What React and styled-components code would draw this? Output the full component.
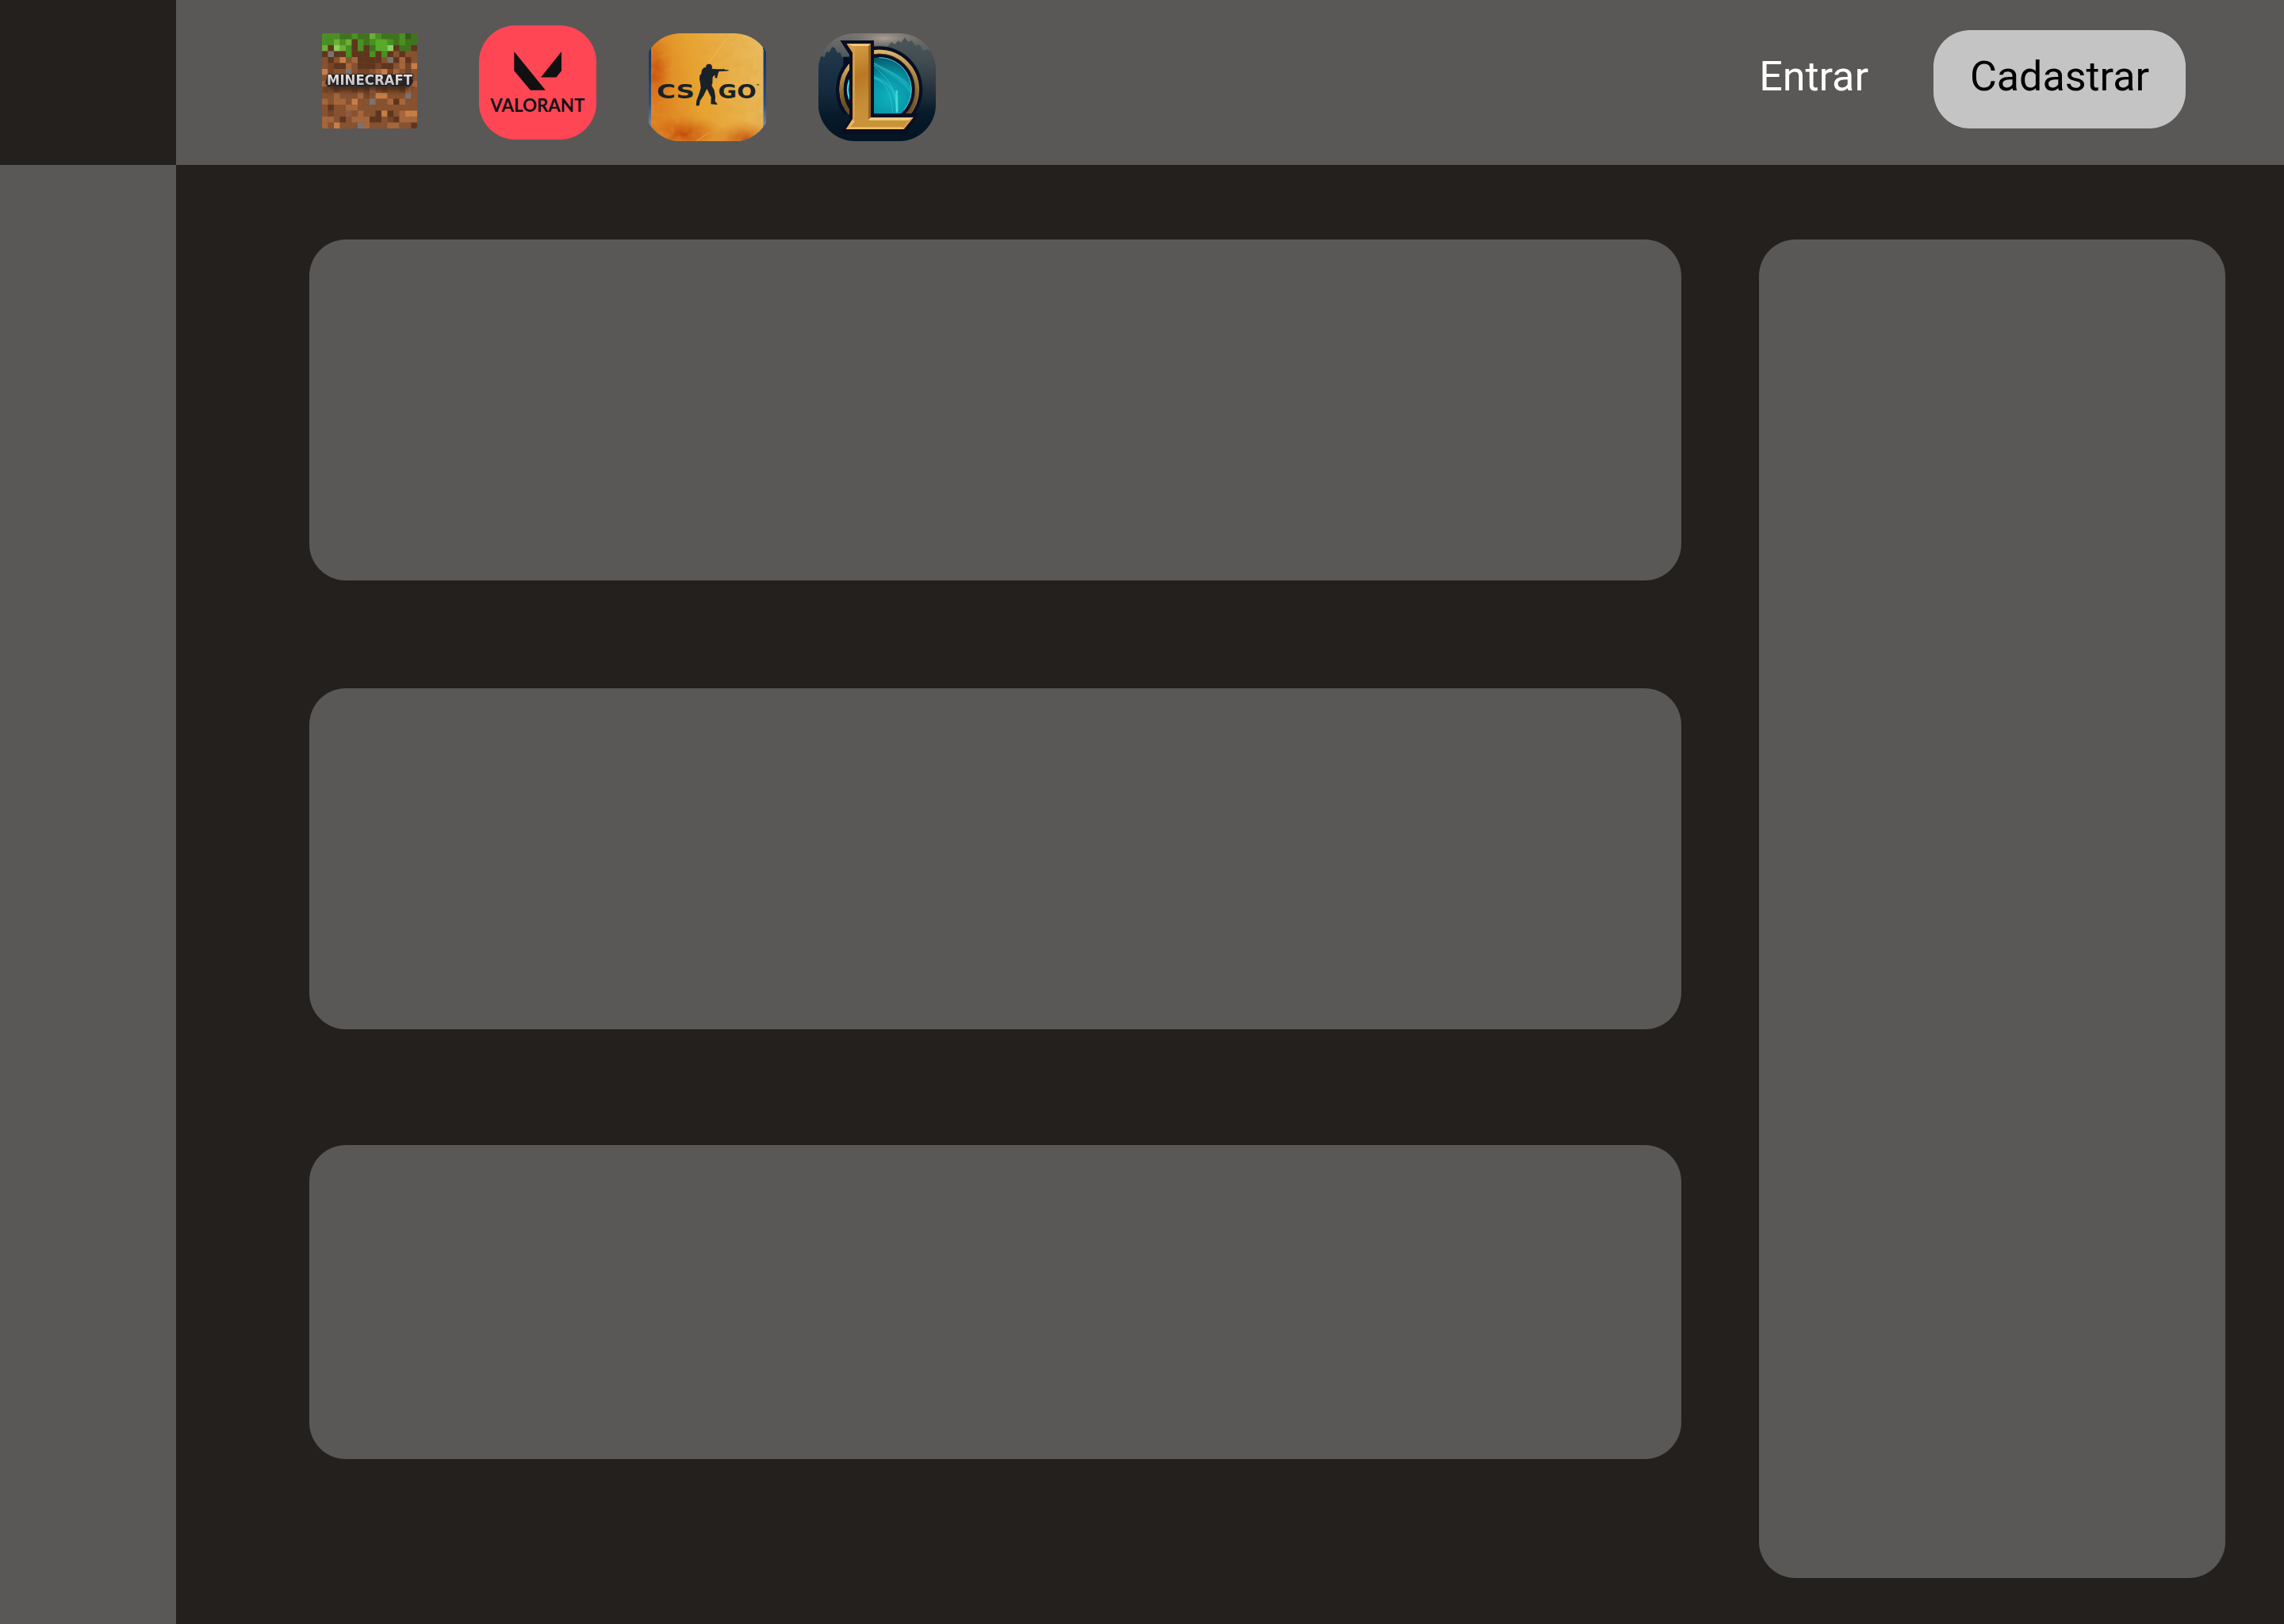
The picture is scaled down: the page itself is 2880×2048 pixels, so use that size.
import React from "react";
import styled, { createGlobalStyle } from "styled-components";

const surface = "#595856";
const ink = "#24201d";

const GlobalStyle = createGlobalStyle`
  * { box-sizing: border-box; }
  body { margin: 0; background: ${ink}; font-family: Roboto, "Liberation Sans", sans-serif; }
`;

const Page = styled.div`
  display: grid;
  grid-template-columns: 222px 1fr;
  grid-template-rows: 208px 1fr;
  width: 100%;
  height: 2048px;
  background: ${ink};
  overflow: hidden;
`;

const Corner = styled.div`
  background: ${ink};
`;

const Header = styled.header`
  display: flex;
  justify-content: space-between;
  align-items: flex-start;
  padding: 32px 124px 0 184px;
  background: ${surface};
`;

const Games = styled.nav`
  display: flex;
  align-items: flex-start;
`;

const Game = styled.a`
  display: block;
  width: ${(p) => p.$w}px;
  height: ${(p) => p.$h}px;
  margin: ${(p) => p.$top || 0}px ${(p) => p.$gap || 0}px 0 0;
  border-radius: ${(p) => p.$radius}px;
  overflow: hidden;
  svg { display: block; width: 100%; height: 100%; }
`;

const Account = styled.div`
  display: flex;
  align-items: center;
  gap: 82px;
  padding-top: 6px;
`;

const Login = styled.a`
  font-size: 52px;
  line-height: 60px;
  color: #fff;
  padding-bottom: 6px;
`;

const SignUp = styled.button`
  width: 318px;
  height: 124px;
  border: 0;
  border-radius: 46px;
  padding: 0 0 6px;
  background: #c4c4c4;
  color: #000;
  font: 400 52px/60px Roboto, "Liberation Sans", sans-serif;
`;

const Sidebar = styled.aside`
  background: ${surface};
`;

const Main = styled.main`
  display: grid;
  grid-template-columns: 1730px 588px;
  column-gap: 98px;
  align-items: start;
  padding: 94px 74px 0 168px;
`;

const Feed = styled.section`
  display: flex;
  flex-direction: column;
`;

const Card = styled.article`
  height: ${(p) => p.$h}px;
  margin-bottom: ${(p) => p.$after || 0}px;
  border-radius: 46px;
  background: ${surface};
`;

const blocks = {
  g: "#4a8f23", d: "#41731f", b: "#6dae38", L: "#8fcf5e", e: "#57ab27", x: "#365c19",
  k: "#5f361d", m: "#754526", n: "#865230", o: "#a4663c", p: "#c67e49", s: "#7b7370", t: "#8d5a42",
};

const dirt = [
  "gggddgddbgdddgxd",
  "ggbgbkgdgeegdgdd",
  "bkLbgkgkdeeLkddk",
  "kskkgkkkgkgknknn",
  "nknpnokkkknskokn",
  "nmkkonkkkmkknomp",
  "pmnnsnmmnopmonmn",
  "nnomonnpnmonopnn",
  "onmnopnmonnomnoo",
  "mnmnnmnmonmnnmon",
  "nnonnnomnppnnnsn",
  "onoonpnnsnnokonn",
  "nknnoonnnnnnnnnn",
  "nmnntnonnkpknopp",
  "oonknoookknmkooo",
  "onpnnnsonnnoonnk",
];

function Minecraft() {
  return (
    <svg viewBox="0 0 120 120">
      <defs>
        <filter id="mcShade" x="-20%" y="-80%" width="140%" height="260%">
          <feGaussianBlur stdDeviation="3" />
        </filter>
        <linearGradient id="mcSteel" x1="0" y1="0" x2="0" y2="1">
          <stop offset="0.3" stopColor="#e4dedd" />
          <stop offset="1" stopColor="#b7afae" />
        </linearGradient>
      </defs>
      <rect width="120" height="120" fill="#865230" />
      {dirt.map((row, y) =>
        [...row].map((c, x) => (
          <rect key={`${x}-${y}`} x={x * 7.5} y={y * 7.5} width="7.7" height="7.7" fill={blocks[c]} />
        ))
      )}
      <rect x="8" y="58" width="103" height="14" fill="#29140a" opacity="0.7" filter="url(#mcShade)" />
      <path d="M8 52h105l2 9-3 5H7l-3-3z" fill="#242326" />
      <text
        x="6" y="64.6" textLength="108" lengthAdjust="spacingAndGlyphs"
        fontFamily="DejaVu Sans Condensed, Liberation Sans, sans-serif" fontWeight="700" fontSize="18"
        fill="url(#mcSteel)" stroke="#1b1a1c" strokeWidth="1.6" paintOrder="stroke"
        style={{ fontStretch: "condensed", filter: "drop-shadow(0 1.5px 0 #28272b) drop-shadow(0 1.5px 0 #333237)" }}
      >
        MINECRAFT
      </text>
    </svg>
  );
}

function Valorant() {
  return (
    <svg viewBox="0 0 148 144">
      <rect width="148" height="144" fill="#ff4655" />
      <path d="M44.3 33 83.9 81.8H64.8L44.3 57.2z M104 33V57.2L97.4 65.4H78z" fill="#111" />
      <text
        x="14.3" y="109" textLength="119" lengthAdjust="spacingAndGlyphs"
        fontFamily="Lato, sans-serif" fontWeight="700" fontSize="22" fill="#111"
      >
        VALORANT
      </text>
    </svg>
  );
}

function CounterStrike() {
  const lettering = {
    fontFamily: "DejaVu Sans, sans-serif",
    fontWeight: 700,
    fontSize: 24.5,
    fill: "#182228",
    lengthAdjust: "spacingAndGlyphs",
  };
  return (
    <svg viewBox="0 0 148 136">
      <defs>
        <clipPath id="csShape"><rect x="-6" width="160" height="136" rx="46" /></clipPath>
        <linearGradient id="csBase" x1="0" y1="0.3" x2="1" y2="0.1">
          <stop offset="0" stopColor="#dd801e" />
          <stop offset="0.35" stopColor="#e7a22f" />
          <stop offset="1" stopColor="#e9bd61" />
        </linearGradient>
        <linearGradient id="csSide" x1="0" y1="0" x2="0" y2="1">
          <stop offset="0.3" stopColor="#173a70" />
          <stop offset="0.65" stopColor="#28508a" />
          <stop offset="0.85" stopColor="#77869f" />
        </linearGradient>
        <radialGradient id="csRust">
          <stop offset="0" stopColor="#bd3c05" stopOpacity="0.85" />
          <stop offset="1" stopColor="#d36b12" stopOpacity="0" />
        </radialGradient>
        <filter id="csGrain" x="0" y="0" width="100%" height="100%">
          <feTurbulence type="fractalNoise" baseFrequency="0.09" numOctaves="5" seed="8" />
          <feColorMatrix values="0 0 0 0 0.77  0 0 0 0 0.35  0 0 0 0 0.05  1.8 0 0 0 -0.75" />
        </filter>
      </defs>
      <g clipPath="url(#csShape)">
        <rect width="148" height="136" fill="url(#csSide)" />
        <rect x="3" width="141" height="136" fill="url(#csBase)" />
        <g>
          <ellipse cx="8" cy="48" rx="24" ry="48" fill="url(#csRust)" opacity="0.85" />
          <ellipse cx="46" cy="127" rx="52" ry="24" fill="url(#csRust)" />
          <ellipse cx="122" cy="134" rx="44" ry="23" fill="url(#csRust)" />
        </g>
        <rect x="3" width="141" height="136" filter="url(#csGrain)" opacity="0.5" />
        <rect width="3" height="136" fill="url(#csSide)" />
        <rect x="144.5" width="3.5" height="136" fill="url(#csSide)" />
        <path d="M98 7 75 38M76 125l-17 12" stroke="#efcb77" strokeWidth="0.8" opacity="0.7" />
        <path d="M144.4 20v95" stroke="#b7aa8c" strokeWidth="0.8" />
        <text x="10" y="82.2" textLength="48" {...lettering}>CS</text>
        <text x="87.6" y="82.2" textLength="48" {...lettering}>GO</text>
        <text x="135" y="68" textLength="5" {...lettering} fontSize="5">™</text>
        <path
          transform="scale(.33333) translate(-39 -51)"
          fill="#182228"
          d="M256 173 262 167 274 168 279 177 278 185 300 187 321 187 323 184 325 188 341 190v3l-17 1-19 1-3 6-5 20-8-2 1-11-9 8-1 24-3 8 10 18 4 25-1 18 8 8v4l-24-2 1-26-16-32-12 25-14 21-3 18h-12l2-20 10-27 6-20-2-19-3-14 1-16 5-3 3-16 8-9 9-2-3-5z"
        />
      </g>
    </svg>
  );
}

function League() {
  return (
    <svg viewBox="51 51 444 408">
      <defs>
        <linearGradient id="lolSky" x1="0" y1="0" x2="0" y2="1">
          <stop offset="0" stopColor="#77736d" />
          <stop offset="0.2" stopColor="#515b5e" />
          <stop offset="0.48" stopColor="#26333f" />
          <stop offset="0.75" stopColor="#071a2a" />
          <stop offset="1" stopColor="#041423" />
        </linearGradient>
        <radialGradient id="lolGlow">
          <stop offset="0" stopColor="#b5a698" stopOpacity="0.9" />
          <stop offset="1" stopColor="#7d7a75" stopOpacity="0" />
        </radialGradient>
        <linearGradient id="lolForest" x1="0" y1="0" x2="0" y2="1">
          <stop offset="0" stopColor="#233a49" />
          <stop offset="0.5" stopColor="#152c42" />
          <stop offset="1" stopColor="#041423" stopOpacity="0" />
        </linearGradient>
        <linearGradient id="lolPines" x1="0" y1="0" x2="0" y2="1">
          <stop offset="0" stopColor="#475457" />
          <stop offset="1" stopColor="#263239" stopOpacity="0" />
        </linearGradient>
        <linearGradient id="lolRing" x1="0" y1="0" x2="0" y2="1">
          <stop offset="0" stopColor="#d9b26c" />
          <stop offset="0.35" stopColor="#a97e3a" />
          <stop offset="0.8" stopColor="#6b4e26" />
        </linearGradient>
        <linearGradient id="lolGold" x1="0" y1="0" x2="0.3" y2="1">
          <stop offset="0" stopColor="#d8a349" />
          <stop offset="0.4" stopColor="#b97824" />
          <stop offset="0.7" stopColor="#c58d38" />
          <stop offset="1" stopColor="#c99439" />
        </linearGradient>
        <radialGradient id="lolOrb" cx="0.65" cy="0.62" r="0.65">
          <stop offset="0" stopColor="#0fb1bf" />
          <stop offset="0.55" stopColor="#0893a5" />
          <stop offset="1" stopColor="#06566b" />
        </radialGradient>
        <clipPath id="lolTop"><path d="M100 80H460V356H385L372 358H100z" /></clipPath>
        <clipPath id="lolDisc"><circle cx="282" cy="264" r="122" /></clipPath>
        <filter id="lolSoft"><feGaussianBlur stdDeviation="3" /></filter>
      </defs>
      <rect x="51" y="51" width="444" height="408" fill="url(#lolSky)" />
      <ellipse cx="300" cy="70" rx="140" ry="42" fill="url(#lolGlow)" />
      <path d="M51 145 62 137 74 142 82 120 92 123 103 103 113 106 123 125 132 123 142 142 155 145 168 155V400H51z" fill="url(#lolForest)" />
      <path d="M310 104 327 84 340 93 352 79 365 86 377 67 390 83 404 78 417 98 432 94 448 116 468 112 495 138V330H310z" fill="url(#lolPines)" />

      <circle cx="281" cy="264" r="164" fill="#080f24" clipPath="url(#lolTop)" />
      <g clipPath="url(#lolTop)">
        <circle cx="281" cy="264" r="143" fill="none" stroke="url(#lolRing)" strokeWidth="15" />
        <circle cx="281" cy="264" r="150" fill="none" stroke="#e2bd78" strokeWidth="2" opacity="0.6" />
        <circle cx="281" cy="264" r="135" fill="none" stroke="#5b4326" strokeWidth="2" />
        <circle cx="282" cy="264" r="122" fill="url(#lolOrb)" />
        <g clipPath="url(#lolDisc)" fill="none" strokeLinecap="round">
          <path d="M250 160C305 194 365 213 402 275M255 215C315 235 354 265 347 365" stroke="#35d5dc" strokeWidth="10" opacity="0.4" filter="url(#lolSoft)" />
          <path d="M250 158C305 193 365 207 405 260M258 169C302 221 353 245 346 362M255 218C305 225 330 285 333 365" stroke="#63e2e4" strokeWidth="2.5" opacity="0.5" />
          <path d="M347 270 348 345" stroke="#5beee8" strokeWidth="8" opacity="0.65" />
        </g>
        <path d="M280 143A121 121 0 0 1 374 342" fill="none" stroke="#54dce6" strokeWidth="3" opacity="0.85" />
        <rect x="145" y="140" width="26" height="216" fill="#080f24" />
        <path d="M169 227Q155 264 169 301" fill="none" stroke="#3bdbea" strokeWidth="7" />
        <path d="M172 171.700A143 143 0 0 0 172 356.300" fill="none" stroke="url(#lolRing)" strokeWidth="15" />
      </g>

      <path d="M133 78H261V355H432L381 431H134L168 374V132z" fill="#090e22" />
      <path d="M158 91H249V370H410L374 414H155L180 382V124z" fill="url(#lolGold)" />
      <path d="M158 91H249L240 99H179z" fill="#f2ce87" />
      <path d="M158 91 180 124 190 111 180 98z" fill="#d59c4d" />
      <path d="M180 122 189 112V378L180 382z" fill="#d59c43" />
      <path d="M249 91V370L240 378V99z" fill="#94621f" />
      <path d="M240 378 249 370H410L392 380H246z" fill="#f2d087" />
      <path d="M410 370 374 414 370 406 392 380z" fill="#d79a4b" />
      <path d="M155 414 170 406H370L374 414z" fill="#edbd62" />
      <path d="M155 414 180 375 189 385 171 406z" fill="#e9b765" />
    </svg>
  );
}

export default function App() {
  return (
    <>
      <GlobalStyle />
      <Page>
        <Corner />
        <Header>
          <Games>
            <Game $w={120} $h={120} $top={10} $gap={78} $radius={2}><Minecraft /></Game>
            <Game $w={148} $h={144} $gap={66} $radius={46}><Valorant /></Game>
            <Game $w={148} $h={136} $top={10} $gap={66} $radius={0}><CounterStrike /></Game>
            <Game $w={148} $h={136} $top={10} $radius={46}><League /></Game>
          </Games>
          <Account>
            <Login>Entrar</Login>
            <SignUp>Cadastrar</SignUp>
          </Account>
        </Header>
        <Sidebar />
        <Main>
          <Feed>
            <Card $h={430} $after={136} />
            <Card $h={430} $after={146} />
            <Card $h={396} />
          </Feed>
          <Card as="aside" $h={1688} />
        </Main>
      </Page>
    </>
  );
}
